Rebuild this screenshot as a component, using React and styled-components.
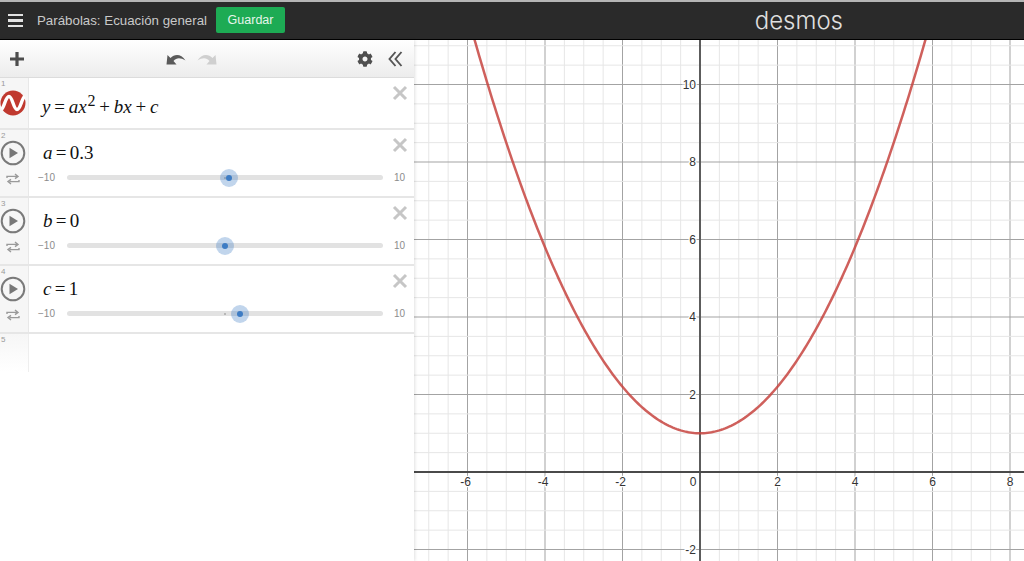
import styled, { createGlobalStyle } from "styled-components";
import { FaCog } from "react-icons/fa";

const SCALE = 38.75;
const GRAPH_W = 610;
const GRAPH_H = 521;
const ORIGIN_X = 286;
const ORIGIN_Y = 432;

const sliders = [
  { id: 2, name: "a", value: 0.3 },
  { id: 3, name: "b", value: 0 },
  { id: 4, name: "c", value: 1 },
];

const range = (from, to) => {
  const out = [];
  for (let i = from; i <= to; i++) out.push(i);
  return out;
};

const curvePath = () => {
  let d = "";
  for (let x = -7.4; x <= 7.6; x += 0.05) {
    const px = ORIGIN_X + x * SCALE;
    const py = ORIGIN_Y - (0.3 * x * x + 1) * SCALE;
    d += (d ? "L" : "M") + px.toFixed(2) + " " + py.toFixed(2);
  }
  return d;
};

const Graph = () => {
  const vertical = range(-15, 16);
  const horizontal = range(-5, 22);
  return (
    <GraphBox viewBox={`0 0 ${GRAPH_W} ${GRAPH_H}`}>
      {vertical.map((i) => {
        const x = ORIGIN_X + (i * SCALE) / 2;
        return (
          <line
            key={i}
            x1={x}
            x2={x}
            y1={0}
            y2={GRAPH_H}
            stroke={i % 4 === 0 ? "#a3a3a3" : "#e6e6e6"}
            strokeWidth={1}
          />
        );
      })}
      {horizontal.map((i) => {
        const y = ORIGIN_Y - (i * SCALE) / 2;
        return (
          <line
            key={i}
            x1={0}
            x2={GRAPH_W}
            y1={y}
            y2={y}
            stroke={i % 4 === 0 ? "#a3a3a3" : "#e6e6e6"}
            strokeWidth={1}
          />
        );
      })}
      <line x1={ORIGIN_X} x2={ORIGIN_X} y1={0} y2={GRAPH_H} stroke="#5c5c5c" strokeWidth={2} />
      <line x1={0} x2={GRAPH_W} y1={ORIGIN_Y} y2={ORIGIN_Y} stroke="#4a4a4a" strokeWidth={2} />
      <path d={curvePath()} fill="none" stroke="#c74440" strokeOpacity={0.85} strokeWidth={2.5} />
      {[-6, -4, -2, 2, 4, 6, 8].map((n) => (
        <AxisLabel
          key={n}
          x={ORIGIN_X + n * SCALE - (n < 0 ? 2 : 0)}
          y={ORIGIN_Y + 14}
          textAnchor="middle"
        >
          {n}
        </AxisLabel>
      ))}
      <AxisLabel x={ORIGIN_X - 7} y={ORIGIN_Y + 14} textAnchor="middle">
        0
      </AxisLabel>
      {[-2, 2, 4, 6, 8, 10].map((n) => (
        <AxisLabel key={n} x={ORIGIN_X - 4} y={ORIGIN_Y - n * SCALE + 4} textAnchor="end">
          {n}
        </AxisLabel>
      ))}
    </GraphBox>
  );
};

const PlayIcon = () => (
  <svg width="26" height="26" viewBox="0 0 26 26">
    <circle cx="13" cy="13" r="11.3" fill="none" stroke="#7a7a7a" strokeWidth="2" />
    <path d="M9.5 7.8 L18 13 L9.5 18.2 Z" fill="#777" />
  </svg>
);

const LoopIcon = () => (
  <svg width="14" height="12" viewBox="0 0 14 12">
    <path
      d="M1 5 V3.4 H10.5 M9 1 L12 3.4 L9 5.6 M13 7 V8.6 H3.5 M5 6.4 L2 8.6 L5 11"
      fill="none"
      stroke="#9a9a9a"
      strokeWidth="1.4"
    />
  </svg>
);

const DesmosMark = () => (
  <svg width="26" height="26" viewBox="0 0 26 26">
    <circle cx="13" cy="13" r="12.5" fill="#c0392f" />
    <path
      d="M1.5 19.5 C4.5 17 5.5 6.5 9 6.5 C12.5 6.5 13.5 19.5 17 19.5 C20.5 19.5 21.5 9 24.5 6.5"
      fill="none"
      stroke="#fff"
      strokeWidth="3.4"
    />
  </svg>
);

const CloseIcon = () => (
  <DeleteBox width="16" height="16" viewBox="0 0 16 16">
    <path d="M2 2 L14 14 M14 2 L2 14" stroke="#c6c6c6" strokeWidth="3" fill="none" />
  </DeleteBox>
);

const PlusIcon = () => (
  <svg width="16" height="16" viewBox="0 0 16 16">
    <path d="M8 1 V15 M1 8 H15" stroke="#4d4d4d" strokeWidth="3.2" fill="none" />
  </svg>
);

const UndoIcon = ({ color, flip }) => (
  <HistoryIcon $flip={flip} width="20" height="14" viewBox="0 0 20 14">
    <path d="M0.5 12.5 L1.5 3 L4.5 6 C8.5 2 15 1.5 19.5 8.5 C14.5 5.5 10.5 5.5 7.5 9 L10.5 12.5 Z" fill={color} />
  </HistoryIcon>
);

const CollapseIcon = () => (
  <svg width="16" height="18" viewBox="0 0 16 18">
    <path d="M8.5 2 L2.5 9 L8.5 16 M14.5 2 L8.5 9 L14.5 16" fill="none" stroke="#555" strokeWidth="1.9" />
  </svg>
);

const SliderRow = ({ id, name, value }) => (
  <Row $height={68}>
    <Gutter>
      <RowNumber>{id}</RowNumber>
      <PlaySlot>
        <PlayIcon />
      </PlaySlot>
      <LoopSlot>
        <LoopIcon />
      </LoopSlot>
    </Gutter>
    <RowBody>
      <SliderMath>
        <i>{name}</i> = {value}
      </SliderMath>
      <SliderLine>
        <Bound>−10</Bound>
        <Track>
          <Thumb style={{ left: `${((value + 10) / 20) * 100}%` }} />
        </Track>
        <Bound>10</Bound>
      </SliderLine>
    </RowBody>
    <CloseIcon />
  </Row>
);

const App = () => {
  return (
    <Page>
      <Global />
      <Header>
        <Burger>
          <span />
          <span />
          <span />
        </Burger>
        <Title>Parábolas: Ecuación general</Title>
        <SaveButton type="button">Guardar</SaveButton>
        <Logo>desmos</Logo>
      </Header>
      <Main>
        <Panel>
          <Toolbar>
            <PlusIcon />
            <History>
              <UndoIcon color="#5a5a5a" />
              <UndoIcon color="#cfcfcf" flip />
            </History>
            <ToolRight>
              <FaCog size={16} color="#4f4f4f" />
              <CollapseIcon />
            </ToolRight>
          </Toolbar>
          <Row $height={52}>
            <Gutter>
              <RowNumber>1</RowNumber>
              <DesmosMark />
            </Gutter>
            <FormulaBody>
              <Formula>
                <i>y</i> = <i>ax</i>
                <sup>2</sup> + <i>bx</i> + <i>c</i>
              </Formula>
            </FormulaBody>
            <CloseIcon />
          </Row>
          {sliders.map((s) => (
            <SliderRow key={s.id} {...s} />
          ))}
          <EmptyRow>
            <RowNumber>5</RowNumber>
          </EmptyRow>
        </Panel>
        <Graph />
      </Main>
    </Page>
  );
};

const Global = createGlobalStyle`
  html, body {
    margin: 0;
    padding: 0;
    height: 100%;
    overflow: hidden;
    background: #fff;
    font-family: "Liberation Sans", Arial, sans-serif;
  }
`;

const Page = styled.div`
  width: 1024px;
  height: 561px;
  display: flex;
  flex-direction: column;
  overflow: hidden;
`;

const Header = styled.header`
  box-sizing: border-box;
  height: 40px;
  display: flex;
  align-items: center;
  padding-left: 8px;
  background: #2a2a2a;
  border-top: 2px solid #b5b5b5;
  border-bottom: 1px solid #000;
`;

const Burger = styled.div`
  width: 15px;
  display: flex;
  flex-direction: column;
  gap: 3px;
  margin-right: 14px;

  span {
    height: 2.5px;
    background: #e2e2e2;
  }
`;

const Title = styled.div`
  font-size: 13.3px;
  color: #c9c9c9;
`;

const SaveButton = styled.button`
  width: 69px;
  height: 26px;
  margin: -1px 0 0 9px;
  padding: 0;
  border: 0;
  border-radius: 2px;
  background: #1dab54;
  color: #e6f5eb;
  font-family: inherit;
  font-size: 12.5px;
`;

const Logo = styled.div`
  margin-left: auto;
  margin-right: 181px;
  font-family: "Inter", sans-serif;
  font-size: 24px;
  font-weight: 300;
  color: #e0e0e0;
`;

const Main = styled.div`
  flex: 1;
  display: flex;
  min-height: 0;
`;

const Panel = styled.aside`
  box-sizing: border-box;
  width: 414px;
  flex: none;
  background: #fff;
  box-shadow: 1px 0 3px rgba(0, 0, 0, 0.12);
  position: relative;
  z-index: 1;
`;

const Toolbar = styled.div`
  box-sizing: border-box;
  height: 38px;
  display: flex;
  align-items: center;
  padding: 0 11px 0 9px;
  background: linear-gradient(#ffffff, #ececec);
  border-bottom: 1px solid #dcdcdc;
`;

const History = styled.div`
  display: flex;
  gap: 11px;
  margin-left: 141px;
`;

const HistoryIcon = styled.svg`
  transform: ${({ $flip }) => ($flip ? "scaleX(-1)" : "none")};
`;

const ToolRight = styled.div`
  margin-left: auto;
  display: flex;
  align-items: center;
  gap: 14px;
`;

const Row = styled.div`
  position: relative;
  box-sizing: border-box;
  height: ${({ $height }) => $height}px;
  display: flex;
  border-bottom: 2px solid #e6e6e6;
`;

const Gutter = styled.div`
  box-sizing: border-box;
  width: 29px;
  flex: none;
  display: flex;
  flex-direction: column;
  align-items: flex-start;
  background: #f6f6f6;
  border-right: 1px solid #e8e8e8;
`;

const RowNumber = styled.div`
  height: 9px;
  margin-bottom: 1px;
  padding: 2px 0 0 1px;
  font-size: 8px;
  line-height: 8px;
  color: #9a9a9a;
`;

const PlaySlot = styled.div`
  height: 26px;
  margin-top: -2px;
`;

const LoopSlot = styled.div`
  width: 26px;
  margin-top: 7px;
  display: flex;
  justify-content: center;
`;

const RowBody = styled.div`
  flex: 1;
  min-width: 0;
  display: flex;
  flex-direction: column;
  padding: 11px 0 0 14px;
`;

const FormulaBody = styled.div`
  flex: 1;
  display: flex;
  align-items: center;
  padding: 7px 0 0 13px;
`;

const Formula = styled.div`
  font-family: "Liberation Serif", "Times New Roman", serif;
  font-size: 19px;
  word-spacing: -1px;
  color: #111;

  sup {
    font-size: 16px;
    line-height: 0;
    vertical-align: 7px;
    margin-left: 1px;
  }
`;

const SliderMath = styled.div`
  height: 24px;
  font-family: "Liberation Serif", "Times New Roman", serif;
  font-size: 19px;
  line-height: 24px;
  word-spacing: -1.5px;
  color: #111;
`;

const SliderLine = styled.div`
  display: flex;
  align-items: center;
  margin: 0 0 0 -5px;
  padding-top: 7px;
`;

const Bound = styled.span`
  width: 29px;
  font-size: 10px;
  color: #8c8c8c;

  &:last-child {
    width: 31px;
    padding-left: 11px;
    box-sizing: border-box;
  }
`;

const Track = styled.div`
  position: relative;
  flex: 1;
  height: 5px;
  border-radius: 3px;
  background: #e2e2e2;

  &::before {
    content: "";
    position: absolute;
    left: 50%;
    top: 1.5px;
    width: 2px;
    height: 2px;
    margin-left: -1px;
    border-radius: 50%;
    background: #a8a8a8;
  }
`;

const Thumb = styled.div`
  position: absolute;
  top: 50%;
  width: 18px;
  height: 18px;
  margin: -9px 0 0 -9.5px;
  border-radius: 50%;
  background: rgba(61, 124, 196, 0.32);

  &::after {
    content: "";
    position: absolute;
    left: 6px;
    top: 6px;
    width: 6px;
    height: 6px;
    border-radius: 50%;
    background: #3d7cc4;
  }
`;

const DeleteBox = styled.svg`
  position: absolute;
  top: 7px;
  right: 6px;
`;

const EmptyRow = styled.div`
  box-sizing: border-box;
  width: 29px;
  height: 38px;
  background: linear-gradient(#f6f6f6, #ffffff);
  border-right: 1px solid #eeeeee;
`;

const GraphBox = styled.svg`
  display: block;
  flex: none;
  width: ${GRAPH_W}px;
  height: ${GRAPH_H}px;
  background: #fff;
`;

const AxisLabel = styled.text`
  font-family: "Liberation Sans", Arial, sans-serif;
  font-size: 12px;
  fill: #333;
  stroke: #fff;
  stroke-width: 2.5px;
  paint-order: stroke;
`;

export default App;
